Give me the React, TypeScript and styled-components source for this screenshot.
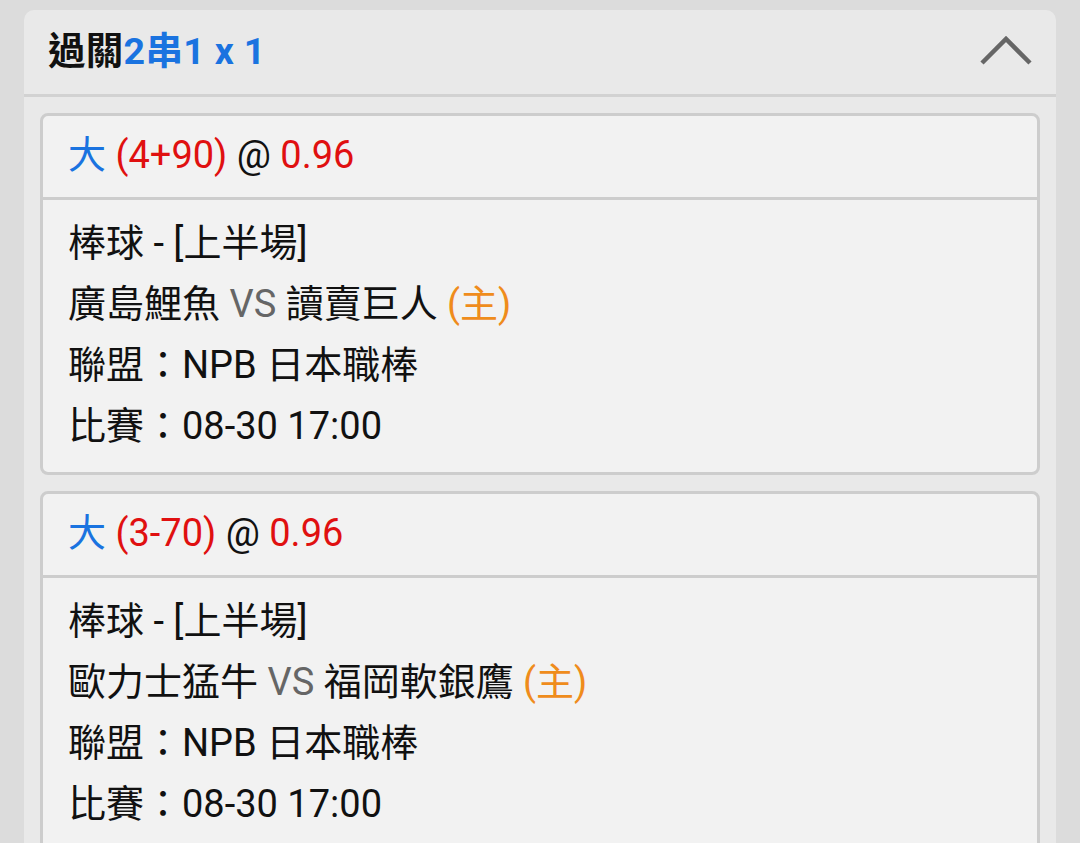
import styled, { createGlobalStyle } from "styled-components";

const GlobalStyle = createGlobalStyle`
  html, body {
    margin: 0;
    padding: 0;
    background: #dcdcdc;
  }
  body {
    font-family: Roboto, "Noto Sans CJK TC", sans-serif;
  }
`;

type Bet = {
  pick: string;
  line: string;
  odds: string;
  sport: string;
  away: string;
  home: string;
  league: string;
  time: string;
};

const bets: Bet[] = [
  {
    pick: "大",
    line: "(4+90)",
    odds: "0.96",
    sport: "棒球 - [上半場]",
    away: "廣島鯉魚",
    home: "讀賣巨人",
    league: "NPB 日本職棒",
    time: "08-30 17:00",
  },
  {
    pick: "大",
    line: "(3-70)",
    odds: "0.96",
    sport: "棒球 - [上半場]",
    away: "歐力士猛牛",
    home: "福岡軟銀鷹",
    league: "NPB 日本職棒",
    time: "08-30 17:00",
  },
];

export default function App() {
  return (
    <Page>
      <GlobalStyle />
      <Panel>
        <Header>
          <Title>
            過關<Blue>2串1 x 1</Blue>
          </Title>
          <Chevron width="52" height="32" viewBox="0 0 52 32">
            <polyline
              points="2,28 26,4 50,28"
              fill="none"
              stroke="#666"
              strokeWidth="4.5"
            />
          </Chevron>
        </Header>
        <List>
          {bets.map((b, i) => (
            <Card key={i}>
              <CardHead>
                <Blue>{b.pick}</Blue> <Red>{b.line}</Red> @ <Red>{b.odds}</Red>
              </CardHead>
              <CardBody>
                <Line>{b.sport}</Line>
                <Line>
                  {b.away} <Gray>VS</Gray> {b.home} <Orange>(主)</Orange>
                </Line>
                <Line>聯盟：{b.league}</Line>
                <Line>比賽：{b.time}</Line>
              </CardBody>
            </Card>
          ))}
        </List>
      </Panel>
    </Page>
  );
}

const Page = styled.div`
  padding: 10px 24px 0;
  height: 843px;
  box-sizing: border-box;
  overflow: hidden;
`;

const Panel = styled.div`
  background: #e9e9e9;
  border-radius: 10px 10px 0 0;
  min-height: 900px;
`;

const Header = styled.div`
  display: flex;
  align-items: center;
  justify-content: space-between;
  box-sizing: border-box;
  height: 87px;
  padding: 0 24px 9px;
  border-bottom: 3px solid #d2d2d2;
`;

const Title = styled.div`
  font-size: 37.5px;
  font-weight: 700;
  color: #111;
  letter-spacing: 0.3px;
`;

const Chevron = styled.svg`
  margin-top: 6px;
`;

const List = styled.div`
  display: flex;
  flex-direction: column;
  gap: 16px;
  padding: 16px;
`;

const Card = styled.div`
  background: #f2f2f2;
  border: 3px solid #cdcdcd;
  border-radius: 8px;
`;

const CardHead = styled.div`
  height: 81px;
  line-height: 79px;
  white-space: pre;
  padding: 0 25px;
  font-size: 38px;
  color: #111;
  border-bottom: 3px solid #cdcdcd;
`;

const CardBody = styled.div`
  padding: 13px 25px 15px;
`;

const Line = styled.div`
  font-size: 38px;
  line-height: 61px;
  color: #111;
  white-space: pre;
`;

const Blue = styled.span`
  color: #1a73e0;
`;

const Red = styled.span`
  color: #e01010;
`;

const Gray = styled.span`
  color: #666;
`;

const Orange = styled.span`
  color: #ef8c1c;
`;
